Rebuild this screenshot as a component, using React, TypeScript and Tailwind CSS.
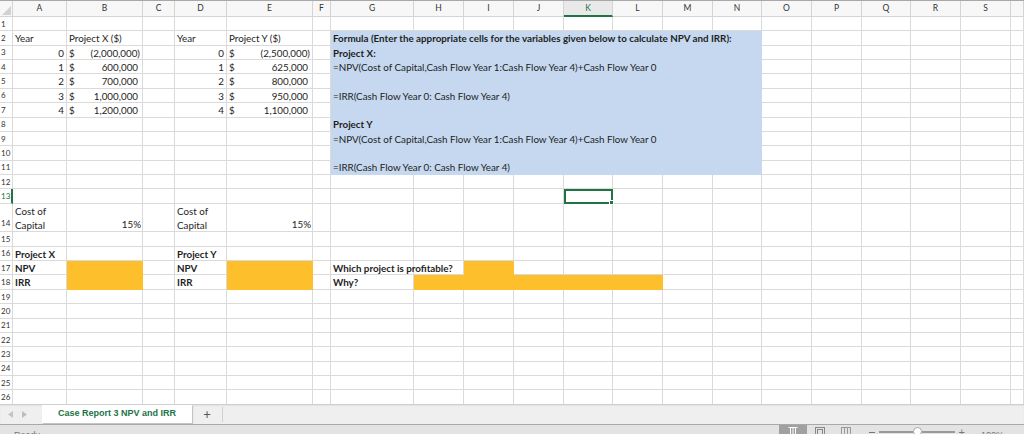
import React from "react";

const COLS =
  "grid-cols-[13px_54px_76px_32px_52px_86px_18px_83px_50px_50px_50px_49px_50px_50px_49px_50px_50px_49px_50px_50px_13px]";
const ROWS = "grid-rows-[16px_repeat(13,14.36px)_28.72px_repeat(12,14.36px)]";

const letters = ["A", "B", "C", "D", "E", "F", "G", "H", "I", "J", "K", "L", "M", "N", "O", "P", "Q", "R", "S", ""];

const dataRows = [
  { row: "row-start-4", year: "0", x: "(2,000,000)", y: "(2,500,000)", neg: true },
  { row: "row-start-5", year: "1", x: "600,000", y: "625,000", neg: false },
  { row: "row-start-6", year: "2", x: "700,000", y: "800,000", neg: false },
  { row: "row-start-7", year: "3", x: "1,000,000", y: "950,000", neg: false },
  { row: "row-start-8", year: "4", x: "1,200,000", y: "1,100,000", neg: false },
];

const formulaLines = [
  { text: "Formula (Enter the appropriate cells for the variables given below to calculate NPV and IRR):", bold: true },
  { text: "Project X:", bold: true },
  { text: "=NPV(Cost of Capital,Cash Flow Year 1:Cash Flow Year 4)+Cash Flow Year 0", bold: false },
  { text: "", bold: false },
  { text: "=IRR(Cash Flow Year 0: Cash Flow Year 4)", bold: false },
  { text: "", bold: false },
  { text: "Project Y", bold: true },
  { text: "=NPV(Cost of Capital,Cash Flow Year 1:Cash Flow Year 4)+Cash Flow Year 0", bold: false },
  { text: "", bold: false },
  { text: "=IRR(Cash Flow Year 0: Cash Flow Year 4)", bold: false },
];

const Cell = ({ className = "", children }: { className?: string; children?: React.ReactNode }) => (
  <div className={`flex items-center whitespace-nowrap px-[2px] pt-px text-[9.8px] leading-none text-[#1e1e1e] ${className}`}>
    {children}
  </div>
);

// gridlines, headers and row numbers
const BaseGrid = () => {
  const rows = Array.from({ length: 26 }, (_, i) => i + 1);
  return (
    <div className={`col-start-1 row-start-1 grid ${COLS} ${ROWS}`}>
      <div className="flex items-end justify-end border-r border-b border-[#d4d4d4] bg-[#f7f7f7] pr-px pb-px">
        <svg width="9" height="9" viewBox="0 0 9 9">
          <path d="M9 0 L9 9 L0 9 Z" fill="#d2d2d2" />
        </svg>
      </div>
      {letters.map((l, i) => (
        <div
          key={i}
          className={
            l === "K"
              ? "flex items-center justify-center border-b-2 border-b-[#217346] border-r border-r-[#d4d4d4] bg-[#e9e9e9] text-[8.5px] text-[#217346]"
              : "flex items-center justify-center border-r border-b border-[#d4d4d4] bg-[#f7f7f7] text-[8.5px] text-[#333]"
          }
        >
          {l}
        </div>
      ))}
      {rows.map((r) => (
        <React.Fragment key={r}>
          <div
            className={
              r === 13
                ? "flex items-center border-r-2 border-r-[#217346] border-b border-b-[#dadada] pl-[1px] text-[8px] text-[#217346]"
                : r === 14
                  ? "flex items-end border-r border-b border-[#dadada] pb-[2px] pl-[1px] text-[8px] text-[#333]"
                  : "flex items-center border-r border-b border-[#dadada] pl-[1px] text-[8px] text-[#333]"
            }
          >
            {r}
          </div>
          {letters.map((_, i) => (
            <div key={i} className="border-r border-b border-[#dadada]" />
          ))}
        </React.Fragment>
      ))}
    </div>
  );
};

const Money = ({ value, neg }: { value: string; neg: boolean }) => (
  <div className="flex w-full items-center justify-between">
    <span>$</span>
    <span className={neg ? "pr-[1px]" : "pr-[3px]"}>{value}</span>
  </div>
);

const Content = () => (
  <div className={`col-start-1 row-start-1 grid ${COLS} ${ROWS}`}>
    {/* headings */}
    <Cell className="col-start-2 row-start-3">Year</Cell>
    <Cell className="col-start-3 row-start-3">Project X ($)</Cell>
    <Cell className="col-start-5 row-start-3">Year</Cell>
    <Cell className="col-start-6 row-start-3">Project Y ($)</Cell>

    {dataRows.map((d) => (
      <React.Fragment key={d.year}>
        <Cell className={`col-start-2 justify-end pr-[3px] ${d.row}`}>{d.year}</Cell>
        <Cell className={`col-start-3 ${d.row}`}>
          <Money value={d.x} neg={d.neg} />
        </Cell>
        <Cell className={`col-start-5 justify-end pr-[3px] ${d.row}`}>{d.year}</Cell>
        <Cell className={`col-start-6 ${d.row}`}>
          <Money value={d.y} neg={d.neg} />
        </Cell>
      </React.Fragment>
    ))}

    {/* formula box */}
    <div className="col-start-8 col-end-16 row-start-3 row-end-13 flex flex-col bg-[#c5d8ef]">
      {formulaLines.map((f, i) => (
        <Cell key={i} className={f.bold ? "h-[14.36px] font-bold" : "h-[14.36px]"}>
          {f.text}
        </Cell>
      ))}
    </div>

    {/* selected cell K13 */}
    <div className="relative col-start-12 row-start-14 border-2 border-[#217346]">
      <div className="absolute -right-[3px] -bottom-[3px] h-[5px] w-[5px] border border-white bg-[#217346]" />
    </div>

    {/* cost of capital */}
    <div className="col-start-2 row-start-15 flex flex-col justify-end px-[2px] text-[9.8px] leading-[14.36px] text-[#1e1e1e]">
      <span>Cost of</span>
      <span>Capital</span>
    </div>
    <Cell className="col-start-3 row-start-15 items-end justify-end pb-[3px] pr-[2px]">15%</Cell>
    <div className="col-start-5 row-start-15 flex flex-col justify-end px-[2px] text-[9.8px] leading-[14.36px] text-[#1e1e1e]">
      <span>Cost of</span>
      <span>Capital</span>
    </div>
    <Cell className="col-start-6 row-start-15 items-end justify-end pb-[3px] pr-[2px]">15%</Cell>

    {/* results */}
    <Cell className="col-start-2 row-start-17 font-bold">Project X</Cell>
    <Cell className="col-start-2 row-start-18 font-bold">NPV</Cell>
    <Cell className="col-start-2 row-start-19 font-bold">IRR</Cell>
    <Cell className="col-start-5 row-start-17 font-bold">Project Y</Cell>
    <Cell className="col-start-5 row-start-18 font-bold">NPV</Cell>
    <Cell className="col-start-5 row-start-19 font-bold">IRR</Cell>
    <div className="col-start-3 row-start-18 row-span-2 bg-[#fdbf2b]" />
    <div className="col-start-6 row-start-18 row-span-2 bg-[#fdbf2b]" />

    <Cell className="col-start-8 col-end-10 row-start-18 font-bold">Which project is profitable?</Cell>
    <div className="col-start-10 row-start-18 bg-[#fdbf2b]" />
    <Cell className="col-start-8 row-start-19 font-bold">Why?</Cell>
    <div className="col-start-9 col-end-14 row-start-19 bg-[#fdbf2b]" />
  </div>
);

const TabBar = () => (
  <div className="flex h-[20px] border-t border-[#cfcfcf] bg-[#efefef] shadow-[inset_0_1px_2px_rgba(0,0,0,0.06)]">
    <div className="flex w-[42px] items-center gap-[9px] pl-[8px]">
      <svg width="5" height="7" viewBox="0 0 5 7">
        <path d="M5 0 L0 3.5 L5 7 Z" fill="#c4c4c4" />
      </svg>
      <svg width="5" height="7" viewBox="0 0 5 7">
        <path d="M0 0 L5 3.5 L0 7 Z" fill="#bdbdbd" />
      </svg>
    </div>
    <div className="flex h-[18px] w-[150px] items-center justify-center bg-white font-['Liberation_Sans',Arial,sans-serif] text-[9px] font-bold text-[#217346] shadow-[1px_1px_1px_rgba(0,0,0,0.18)]">
      Case Report 3 NPV and IRR
    </div>
    <div className="flex w-[30px] items-center justify-center text-[13px] leading-none text-[#555]">+</div>
    <div className="my-[2px] w-px bg-[#cfcfcf]" />
  </div>
);

const StatusBar = () => (
  <div className="flex h-[10px] items-start overflow-hidden border-t border-[#a9a9a9] bg-[#e3e3e3] font-['Liberation_Sans',Arial,sans-serif] text-[9px] leading-none text-[#777]">
    <span className="pl-[14px] pt-[6px]">Ready</span>
    <div className="ml-auto flex h-full items-start">
      <div className="flex h-full w-[28px] items-center justify-center bg-[#a0a0a0] pt-[3px]">
        <svg width="10" height="8" viewBox="0 0 10 8">
          <path d="M0.5 0.5 H9.5 M2.5 0 V8 M5 0 V8 M7.5 0 V8" stroke="#fff" strokeWidth="1" />
        </svg>
      </div>
      <div className="flex h-full w-[26px] items-center justify-center pt-[3px]">
        <svg width="10" height="8" viewBox="0 0 10 8">
          <rect x="0.5" y="0.5" width="9" height="8" fill="none" stroke="#888" />
          <rect x="2.5" y="2.5" width="5" height="6" fill="none" stroke="#888" />
        </svg>
      </div>
      <div className="flex h-full w-[26px] items-center justify-center pt-[3px]">
        <svg width="10" height="8" viewBox="0 0 10 8">
          <path d="M0.5 0.5 H9.5 M0.5 0 V8 M3.5 0 V8 M6.5 0 V8 M9.5 0 V8" stroke="#999" strokeWidth="1" />
        </svg>
      </div>
      <div className="flex h-full items-center gap-[4px] pl-[10px] pr-[4px] pt-[5px]">
        <span className="h-px w-[6px] bg-[#777]" />
        <div className="relative h-[2px] w-[76px] bg-[#9a9a9a]">
          <div className="absolute left-[34px] -top-[4px] h-[9px] w-[9px] rounded-full border border-[#aaa] bg-white" />
        </div>
        <span className="text-[11px] text-[#777]">+</span>
      </div>
      <span className="pl-[12px] pr-[20px] pt-[6px]">100%</span>
    </div>
  </div>
);

export default function App() {
  return (
    <div className="flex h-[434px] w-[1024px] flex-col overflow-hidden bg-white font-['Lato','Noto_Sans',sans-serif]">
      <div className="grid h-[404px] border-t border-[#a8a8a8]">
        <BaseGrid />
        <Content />
      </div>
      <TabBar />
      <StatusBar />
    </div>
  );
}
